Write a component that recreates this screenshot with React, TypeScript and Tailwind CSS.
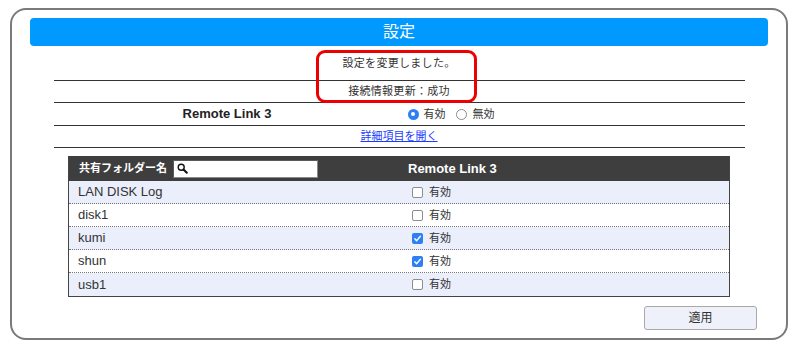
const ROWS = [
  { name: 'LAN DISK Log', on: false },
  { name: 'disk1', on: false },
  { name: 'kumi', on: true },
  { name: 'shun', on: true },
  { name: 'usb1', on: false },
];

function CheckBox({ on }: { on: boolean }) {
  if (on) {
    return (
      <span className="w-[11px] h-[11px] rounded-[2px] bg-[#2d7ff5] flex items-center justify-center">
        <svg width="9" height="9" viewBox="0 0 10 10">
          <path d="M2 5.2l2 2.2L8.2 2.6" fill="none" stroke="white" strokeWidth="1.6" strokeLinecap="round" strokeLinejoin="round" />
        </svg>
      </span>
    );
  }
  return <span className="w-[11px] h-[11px] rounded-[2px] bg-white border border-[#8d8d8d]" />;
}

export default function App() {
  return (
    <div className="w-[800px] h-[351px] bg-white pt-[8px] pl-[10px] text-[#333] font-['Liberation_Sans','Noto_Sans_CJK_JP',sans-serif]">
      <div className="relative w-[778px] h-[332px] border-2 border-[#7a7a7a] rounded-[16px] flex flex-col items-center">
        {/* title bar */}
        <div className="mt-[8px] w-[738px] h-[28px] bg-[#0099ff] rounded-[4px] flex items-center justify-center text-white text-[16px]">
          設定
        </div>

        {/* status + settings */}
        <div className="w-[691px] flex flex-col text-[11px]">
          <div className="h-[35px] border-b border-[#333] flex items-center justify-center tracking-[0.3px]">設定を変更しました。</div>
          <div className="h-[22px] border-b border-[#333] flex items-center justify-center tracking-[0.3px]">接続情報更新：成功</div>
          <div className="h-[23px] border-b border-[#333] flex items-center">
            <div className="w-[347px] text-center text-[13px] font-bold text-[#222]">Remote Link 3</div>
            <div className="flex items-center pl-[7px]">
              <span className="w-[11px] h-[11px] rounded-full bg-[#2d7ff5] flex items-center justify-center">
                <span className="w-[4px] h-[4px] rounded-full bg-white" />
              </span>
              <span className="ml-[5px]">有効</span>
              <span className="ml-[10px] w-[11px] h-[11px] rounded-full bg-white border border-[#8d8d8d]" />
              <span className="ml-[6px]">無効</span>
            </div>
          </div>
          <div className="h-[22px] border-b border-[#333] flex items-center justify-center">
            <a href="#" className="text-[#1a3cff] underline">詳細項目を開く</a>
          </div>
        </div>

        {/* folder table */}
        <div className="mt-[8px] w-[662px] border border-[#444] border-t-0 flex flex-col">
          <div className="h-[25px] bg-[#3e3e3e] text-white flex items-center">
            <div className="w-[331px] flex items-center pl-[10px]">
              <span className="text-[11px] font-bold">共有フォルダー名</span>
              <div className="ml-[6px] w-[145px] h-[18px] bg-white border border-[#8a8a8a] border-t-[#5a5a5a] border-l-[#5a5a5a] flex items-center pl-[3px]">
                <svg width="11" height="11" viewBox="0 0 11 11">
                  <circle cx="4.2" cy="4.2" r="3" fill="none" stroke="#111" strokeWidth="1.4" />
                  <path d="M6.5 6.5L9.8 9.8" stroke="#111" strokeWidth="2" strokeLinecap="round" />
                </svg>
              </div>
            </div>
            <div className="pl-[8px] text-[13px] font-bold">Remote Link 3</div>
          </div>
          {ROWS.map((r, i) => (
            <div
              key={r.name}
              className={`h-[23px] flex items-center ${i % 2 === 0 ? 'bg-[#ebeefb]' : 'bg-white'} ${
                i < ROWS.length - 1 ? 'border-b border-dotted border-[#777]' : ''
              }`}
            >
              <div className="w-[331px] pl-[9px] text-[13px]">{r.name}</div>
              <div className="flex items-center pl-[12px] text-[11px]">
                <CheckBox on={r.on} />
                <span className="ml-[6px]">有効</span>
              </div>
            </div>
          ))}
        </div>

        {/* apply */}
        <button className="mt-[9px] self-end mr-[29px] w-[113px] h-[24px] bg-[#eef0fa] border border-[#a9a9a9] rounded-[3px] text-[12px] text-[#333]">
          適用
        </button>

        {/* highlight */}
        <div className="absolute left-[304px] top-[40px] w-[161px] h-[53px] border-[3px] border-[#ee0000] rounded-[9px]" />
      </div>
    </div>
  );
}
